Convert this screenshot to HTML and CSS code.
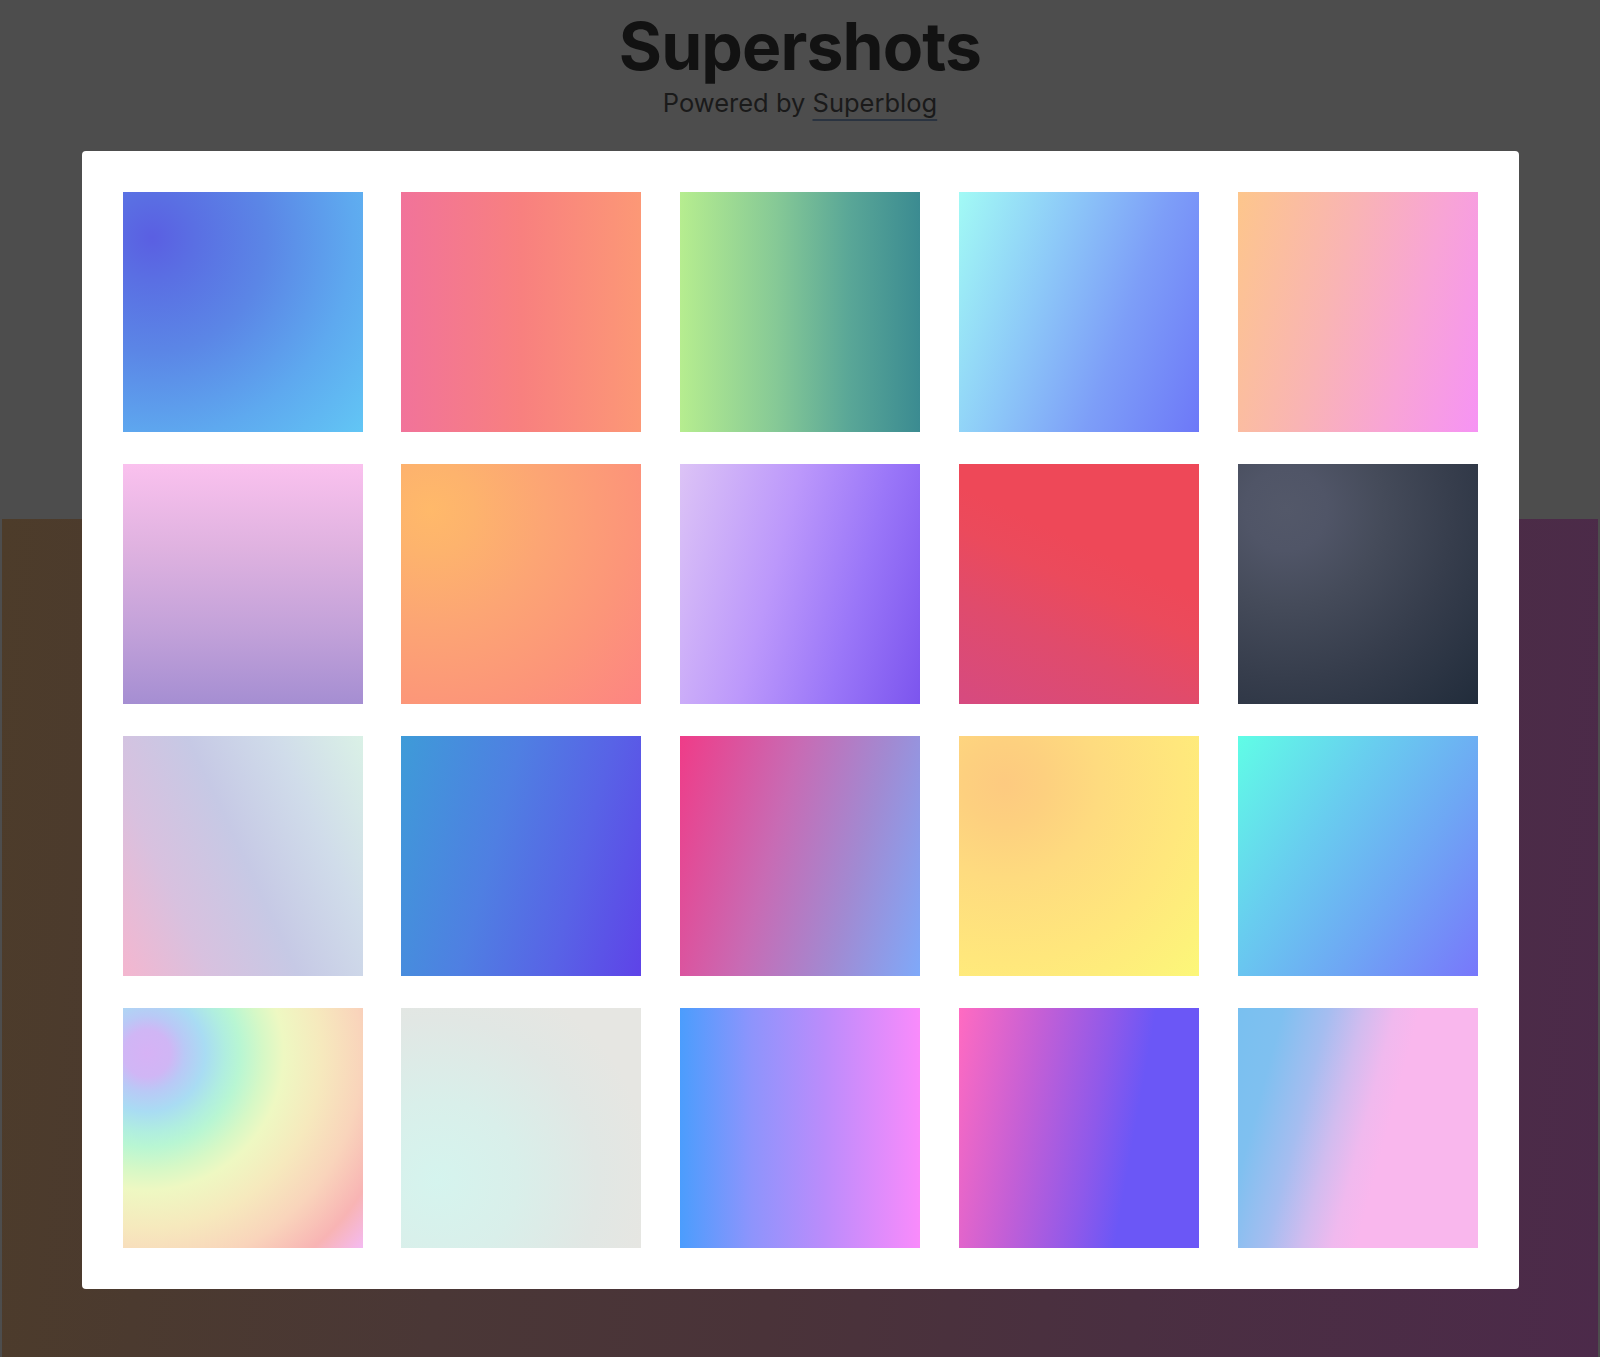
FILE: index.html
```html
<!DOCTYPE html>
<html lang="en">
    <head>
        <meta charset="UTF-8" />
        <meta name="viewport" content="width=device-width, initial-scale=1.0" />
        <title>Supershots</title>
        <link rel="stylesheet" href="styles.css">
    </head>
    <body>
        <header class="masthead">
            <h1>Supershots</h1>
            <p>Powered by <a href="#">Superblog</a></p>
        </header>
        <main class="panel">
            <div class="shots">
                <div class="shot"></div>
                <div class="shot"></div>
                <div class="shot"></div>
                <div class="shot"></div>
                <div class="shot"></div>
                <div class="shot"></div>
                <div class="shot"></div>
                <div class="shot"></div>
                <div class="shot"></div>
                <div class="shot"></div>
                <div class="shot"></div>
                <div class="shot"></div>
                <div class="shot"></div>
                <div class="shot"></div>
                <div class="shot"></div>
                <div class="shot"></div>
                <div class="shot"></div>
                <div class="shot"></div>
                <div class="shot"></div>
                <div class="shot"></div>
            </div>
        </main>
    </body>
</html>
```

FILE: styles.css
```css
html {
    min-height: 100%;
}
body {
    margin: 0;
    min-height: 1357px;
    font-family: Inter, "Noto Sans", sans-serif;
    background:
        linear-gradient(95deg, #4d3c2a 0%, #4b3a2f 12%, #4a3736 30%, #4a3339 50%, #4a2f41 72%, #4c2a4a 100%) no-repeat 2px 519px / calc(100% - 4px) calc(100% - 519px),
        #4d4d4d;
    overflow: hidden;
}
.masthead {
    text-align: center;
    padding-top: 13px;
}
.masthead h1 {
    margin: 0;
    font-size: 66px;
    line-height: 66px;
    font-weight: 700;
    letter-spacing: -0.9px;
    color: #121212;
}
.masthead p {
    margin: 6px 0 0;
    font-size: 25.5px;
    line-height: 36px;
    color: #1a1a1a;
}
.masthead a {
    color: #1a1a1a;
    text-decoration: underline;
    text-decoration-color: #2a3340;
    text-decoration-thickness: 2px;
    text-underline-offset: 7px;
}
.panel {
    box-sizing: border-box;
    width: 1437px;
    margin: 30px auto 0;
    padding: 41px;
    background: #fff;
    border-radius: 4px;
}
.shots {
    display: grid;
    grid-template-columns: repeat(5, 240px);
    justify-content: space-between;
    row-gap: 32px;
}
.shot {
    height: 240px;
}
.shot:nth-of-type(1) {
    background: radial-gradient(circle at 12% 19%, #5a5fe2 0%, #5a6fe3 15%, #5b86e6 40%, #5ea9ef 70%, #62c6f5 100%);
}
.shot:nth-of-type(2) {
    background: linear-gradient(90deg, #f1739a 0%, #f8807f 50%, #fc9876 100%);
}
.shot:nth-of-type(3) {
    background: linear-gradient(90deg, #b6ed8f 0%, #86c996 40%, #5aa797 70%, #3b8b91 100%);
}
.shot:nth-of-type(4) {
    background: linear-gradient(110deg, #a2faf5 0%, #8dc9f8 35%, #7d9ef8 65%, #6d78f8 100%);
}
.shot:nth-of-type(5) {
    background: linear-gradient(105deg, #fdc68c 0%, #f9b4b4 40%, #f8a4d6 70%, #f693f4 100%);
}
.shot:nth-of-type(6) {
    background: linear-gradient(180deg, #fac1ee 0%, #dfb2e0 35%, #c2a1d9 70%, #a58ed2 100%);
}
.shot:nth-of-type(7) {
    background: radial-gradient(circle at 12% 19%, #ffb96a 0%, #fdb36d 15%, #fca574 40%, #fc9579 70%, #fd8482 100%);
}
.shot:nth-of-type(8) {
    background: linear-gradient(105deg, #dcc3f6 0%, #bc98fb 40%, #9a76f8 70%, #7c55ee 100%);
}
.shot:nth-of-type(9) {
    background: linear-gradient(25deg, #d64a80 0%, #e04b6c 30%, #eb4a5c 50%, #ee4858 62%, #ee4858 100%);
}
.shot:nth-of-type(10) {
    background: radial-gradient(circle at 20% 19%, #535869 0%, #505567 15%, #454b5a 35%, #363d4c 62%, #212c3b 100%);
}
.shot:nth-of-type(11) {
    background: linear-gradient(65deg, #f4b6cf 0%, #d8c1df 25%, #c6c9e5 50%, #d0dcea 75%, #daf1e6 100%);
}
.shot:nth-of-type(12) {
    background: linear-gradient(105deg, #3e9bd8 0%, #4f7fe2 40%, #5863e6 70%, #5e43e8 100%);
}
.shot:nth-of-type(13) {
    background: linear-gradient(105deg, #ef3c88 0%, #c86bb4 40%, #a18ad2 70%, #7fa9f9 100%);
}
.shot:nth-of-type(14) {
    background: radial-gradient(circle at 19% 20%, #fdca80 0%, #fdd07f 15%, #fedb7f 35%, #ffe77c 65%, #fcf779 100%);
}
.shot:nth-of-type(15) {
    background: linear-gradient(125deg, #60fde6 0%, #68cdef 35%, #6ea7f4 65%, #7877fb 100%);
}
.shot:nth-of-type(16) {
    background: radial-gradient(circle at 10% 19%, #d6b2f5 0%, #d0b6f5 8%, #b9c9f6 13%, #a9dcf3 20%, #b0eedf 27%, #b8f6d3 32%, #d6f8c6 40%, #eef8c2 47%, #f6e9bd 60%, #f9d4bb 74%, #f8b4b4 88%, #f4baf2 100%);
}
.shot:nth-of-type(17) {
    background: radial-gradient(circle at 15% 72%, #d5f4ee 0%, #d9efea 30%, #e1e7e4 60%, #e6e6e2 80%);
}
.shot:nth-of-type(18) {
    background: linear-gradient(90deg, #4b9dfd 0%, #8e94fc 30%, #bb8cfb 60%, #f98bfb 100%);
}
.shot:nth-of-type(19) {
    background: linear-gradient(100deg, #ff6bc1 0%, #c35fd6 30%, #8f59ea 55%, #6b57f6 70%, #6b57f6 100%);
}
.shot:nth-of-type(20) {
    background: linear-gradient(105deg, #79c0f0 0%, #7fc0f0 15%, #a5bdf0 30%, #d2bcef 42%, #f0b9ee 52%, #f9b7ed 60%, #f9b7ed 100%);
}
```
